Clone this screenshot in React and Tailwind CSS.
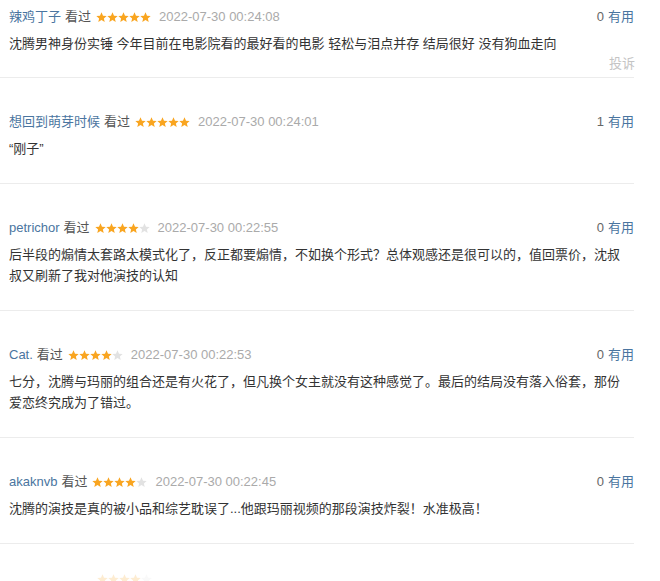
import React from "react";

const FONT = { fontFamily: '"Liberation Sans", "Noto Sans CJK SC", sans-serif' };

function Star({ filled }) {
  return (
    <svg width="11" height="11" viewBox="0 0 24 24" className="block">
      <path
        d="M12 0.8l3.3 7.3 7.9.7-6 5.2 1.8 7.8L12 17.7l-7 4.1 1.8-7.8-6-5.2 7.9-.7z"
        fill={filled ? "#f9a520" : "#e2e2e2"}
      />
    </svg>
  );
}

function Stars({ n }) {
  return (
    <span className="flex items-center">
      {[0, 1, 2, 3, 4].map((i) => (
        <Star key={i} filled={i < n} />
      ))}
    </span>
  );
}

function Header({ name, stars, date, useful }) {
  return (
    <div className="flex items-center justify-between h-[20px] leading-[20px] text-[13px]">
      <div className="flex items-center">
        <span className="text-[#4a75a0]">{name}</span>
        <span className="ml-[4px] text-[#555]">看过</span>
        <span className="ml-[5px]"><Stars n={stars} /></span>
        <span className="ml-[8px] text-[#aaa]">{date}</span>
      </div>
      <div>
        <span className="text-[#666]">{useful}</span>
        <span className="ml-[4px] text-[#4a75a0]">有用</span>
      </div>
    </div>
  );
}

const rows = [
  {
    name: "想回到萌芽时候",
    stars: 5,
    date: "2022-07-30 00:24:01",
    useful: "1",
    lines: ["“刚子”"],
  },
  {
    name: "petrichor",
    stars: 4,
    date: "2022-07-30 00:22:55",
    useful: "0",
    lines: [
      "后半段的煽情太套路太模式化了，反正都要煽情，不如换个形式？总体观感还是很可以的，值回票价，沈叔",
      "叔又刷新了我对他演技的认知",
    ],
  },
  {
    name: "Cat.",
    stars: 4,
    date: "2022-07-30 00:22:53",
    useful: "0",
    lines: [
      "七分，沈腾与玛丽的组合还是有火花了，但凡换个女主就没有这种感觉了。最后的结局没有落入俗套，那份",
      "爱恋终究成为了错过。",
    ],
  },
  {
    name: "akaknvb",
    stars: 4,
    date: "2022-07-30 00:22:45",
    useful: "0",
    lines: ["沈腾的演技是真的被小品和综艺耽误了...他跟玛丽视频的那段演技炸裂！水准极高！"],
  },
];

export default function App() {
  return (
    <div className="w-[660px] h-[581px] overflow-hidden bg-white" style={FONT}>
      <div className="w-[634px]">
        <div className="pl-[9px] pt-[7px] pb-[3px] border-b border-[#ececec]">
          <Header name="辣鸡丁子" stars={5} date="2022-07-30 00:24:08" useful="0" />
          <div className="mt-[6px] text-[13px] leading-[21px] text-[#333]">
            沈腾男神身份实锤 今年目前在电影院看的最好看的电影 轻松与泪点并存 结局很好 没有狗血走向
          </div>
          <div className="text-right text-[13px] leading-[20px] text-[#c4c4c4] -mr-[1px]">投诉</div>
        </div>
        {rows.map((r, i) => (
          <div key={i} className="pl-[9px] pt-[34px] pb-[24px] border-b border-[#ececec]">
            <Header name={r.name} stars={r.stars} date={r.date} useful={r.useful} />
            <div className="mt-[6px] text-[13px] leading-[21px] text-[#333]">
              {r.lines.map((l, j) => (
                <div key={j}>{l}</div>
              ))}
            </div>
          </div>
        ))}
        <div className="pt-[30px] flex pl-[97px] opacity-20">
          <Stars n={4} />
        </div>
      </div>
    </div>
  );
}
